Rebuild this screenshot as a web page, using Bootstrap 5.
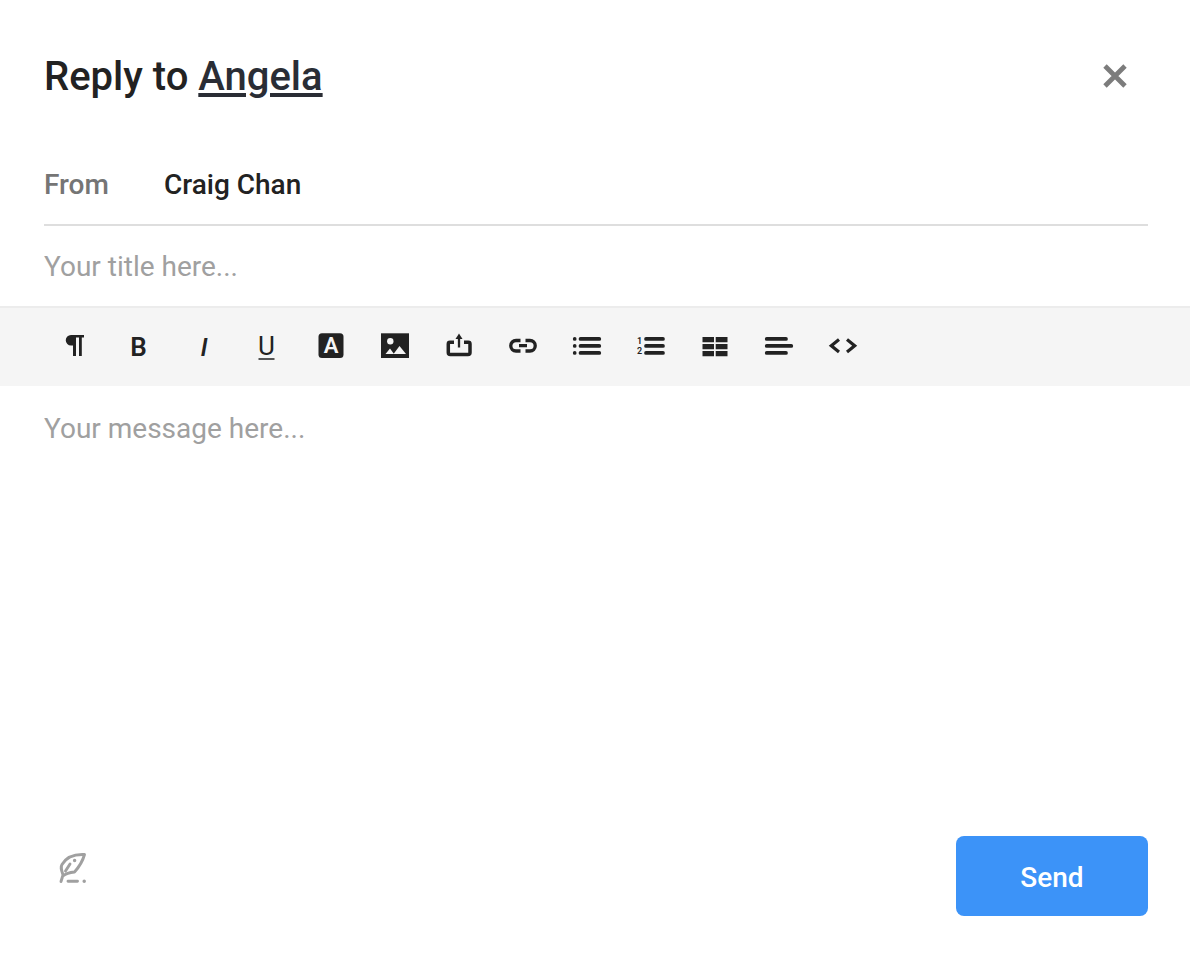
<!DOCTYPE html>
<html lang="en">
<head>
<meta charset="utf-8">
<meta name="viewport" content="width=device-width, initial-scale=1">
<title>Reply to Angela</title>
<link href="https://cdn.jsdelivr.net/npm/bootstrap@5.3.0/dist/css/bootstrap.min.css" rel="stylesheet">
<style>
  body { font-family: Roboto, "Liberation Sans", sans-serif; font-size: 28px; line-height: 32px; color: #222; background: #fff; }
  .gutter { padding-left: 44px; padding-right: 42px; }
  .reply-head { padding-top: 53px; }
  .reply-title { font-size: 40px; line-height: 48px; font-weight: 500; }
  .reply-title a { color: #2a2d35; text-decoration-thickness: 4px; text-underline-offset: 3px; }
  .close-btn { width: 66px; height: 48px; color: #7c7c7c; }
  .from-row { margin-top: 68px; padding-bottom: 23px; border-bottom: 2px solid #dedede; font-weight: 500; }
  .from-label { width: 120px; color: #757575; }
  .field { border: 0; border-radius: 0; padding: 0; color: #222; font-size: 28px; line-height: 32px; background: transparent; box-shadow: none; outline: 0; }
  .field::placeholder { color: #a0a0a0; opacity: 1; }
  .title-field { height: 80px; }
  .tools { padding: 0 43px; min-height: 80px; background: #f5f5f5; box-shadow: inset 0 2px #ececec; color: #222; }
  .tool { width: 64px; height: 80px; color: inherit; }
  .tool svg, .close-btn svg, .sign-btn svg { width: 32px; height: 32px; display: block; }
  .glyph { font-family: Roboto, sans-serif; font-size: 26px; }
  .glyph-a { font-size: 22px; }
  .glyph-digit { font-size: 9px; }
  .message-field { padding-top: 27px; resize: none; }
  .reply-foot { padding-bottom: 46px; }
  .sign-btn { width: 58px; height: 64px; color: #a0a0a0; }
  .send-btn { width: 192px; height: 80px; border-radius: 8px; background: #3c93f8; color: #fff; font-size: 28px; line-height: 32px; font-weight: 500; }
</style>
</head>
<body>
<form class="d-flex flex-column min-vh-100">
  <header class="reply-head gutter d-flex justify-content-between align-items-center">
    <h1 class="reply-title m-0">Reply to <a href="#">Angela</a></h1>
    <button type="button" class="close-btn btn border-0 p-0 d-flex align-items-center justify-content-center" aria-label="Close">
      <svg viewBox="0 0 32 32" fill="none" stroke="currentColor" stroke-width="4.800"><path d="M6 5 26 25M26 5 6 25"/></svg>
    </button>
  </header>

  <div class="gutter">
    <div class="from-row d-flex">
      <span class="from-label">From</span>
      <span>Craig Chan</span>
    </div>
    <input type="text" class="field title-field form-control" placeholder="Your title here..." aria-label="Title">
  </div>

  <div class="tools d-flex flex-wrap" role="toolbar" aria-label="Formatting">
    <button type="button" class="tool btn border-0 p-0 d-flex align-items-center justify-content-center" aria-label="Paragraph">
      <svg viewBox="0 0 32 32" fill="currentColor"><path d="M12 5H25V7.500H22.800V26H20V7.500H17V26H14V15.500H12A5.200 5.200 0 0 1 12 5Z"/></svg>
    </button>
    <button type="button" class="tool btn border-0 p-0 d-flex align-items-center justify-content-center" aria-label="Bold">
      <svg viewBox="0 0 32 32" fill="currentColor"><text class="glyph" x="15.500" y="26" text-anchor="middle" font-weight="600">B</text></svg>
    </button>
    <button type="button" class="tool btn border-0 p-0 d-flex align-items-center justify-content-center" aria-label="Italic">
      <svg viewBox="0 0 32 32" fill="currentColor"><text class="glyph" x="17" y="26" text-anchor="middle" font-style="italic" font-weight="500">I</text></svg>
    </button>
    <button type="button" class="tool btn border-0 p-0 d-flex align-items-center justify-content-center" aria-label="Underline">
      <svg viewBox="0 0 32 32" fill="currentColor"><text class="glyph" x="15.500" y="25" text-anchor="middle">U</text><path fill="#555" d="M7.500 28H23.500V30H7.500Z"/></svg>
    </button>
    <button type="button" class="tool btn border-0 p-0 d-flex align-items-center justify-content-center" aria-label="Text colour">
      <svg viewBox="0 0 32 32" fill="currentColor"><rect x="3.500" y="3.300" width="25" height="24.700" rx="3.500"/><text class="glyph glyph-a" x="16" y="23" text-anchor="middle" font-weight="600" fill="#f5f5f5">A</text></svg>
    </button>
    <button type="button" class="tool btn border-0 p-0 d-flex align-items-center justify-content-center" aria-label="Insert image">
      <svg viewBox="0 0 32 32" fill="currentColor"><path d="M2 3.300H30V28H2Z"/><g fill="#f5f5f5"><circle cx="11.300" cy="11.300" r="3.200"/><path d="M6.500 24 11 18.500 15 24ZM14.500 24 20.500 16 27 24Z"/></g></svg>
    </button>
    <button type="button" class="tool btn border-0 p-0 d-flex align-items-center justify-content-center" aria-label="Upload">
      <svg viewBox="0 0 32 32" fill="none" stroke="currentColor" stroke-width="3.500"><path d="M11 12.300H7Q5.300 12.300 5.300 14V22.500Q5.300 24.500 7.300 24.500H25Q27 24.500 27 22.500V14Q27 12.300 25.300 12.300H21"/><path stroke-width="2.300" d="M16 7V17.500"/><path fill="currentColor" stroke="none" d="M16 3.500 19.500 9H12.500Z"/></svg>
    </button>
    <button type="button" class="tool btn border-0 p-0 d-flex align-items-center justify-content-center" aria-label="Insert link">
      <svg viewBox="0 0 32 32" fill="none" stroke="currentColor" stroke-width="3.300"><path d="M13.500 10.500H9A5.200 5.200 0 0 0 9 21H13.500M18.500 10.500H23A5.200 5.200 0 0 1 23 21H18.500M12 15.700H20"/></svg>
    </button>
    <button type="button" class="tool btn border-0 p-0 d-flex align-items-center justify-content-center" aria-label="Bulleted list">
      <svg viewBox="0 0 32 32" fill="none" stroke="currentColor" stroke-width="3.700" stroke-linecap="round"><path d="M3.700 8.900H3.710M3.700 15.900H3.710M3.700 22.900H3.710M9.500 8.900H28.300M9.500 15.900H28.300M9.500 22.900H28.300"/></svg>
    </button>
    <button type="button" class="tool btn border-0 p-0 d-flex align-items-center justify-content-center" aria-label="Numbered list">
      <svg viewBox="0 0 32 32" fill="none" stroke="currentColor" stroke-width="3.700" stroke-linecap="round"><path d="M11 8.900H28M11 15.900H28M11 22.900H28"/><g class="glyph glyph-digit" font-weight="600" fill="currentColor" stroke="none"><text x="2" y="14">1</text><text x="2" y="24">2</text></g></svg>
    </button>
    <button type="button" class="tool btn border-0 p-0 d-flex align-items-center justify-content-center" aria-label="Insert table">
      <svg viewBox="0 0 32 32" fill="currentColor"><path d="M3.500 7H15V12.200H3.500ZM16.700 7H28.500V12.200H16.700ZM3.500 14H15V19.200H3.500ZM16.700 14H28.500V19.200H16.700ZM3.500 21H15V26.200H3.500ZM16.700 21H28.500V26.200H16.700Z"/></svg>
    </button>
    <button type="button" class="tool btn border-0 p-0 d-flex align-items-center justify-content-center" aria-label="Align">
      <svg viewBox="0 0 32 32" fill="none" stroke="currentColor" stroke-width="3.700" stroke-linecap="round"><path d="M3.700 8.900H23M3.700 15.900H28.300M3.700 22.900H23"/></svg>
    </button>
    <button type="button" class="tool btn border-0 p-0 d-flex align-items-center justify-content-center" aria-label="Code">
      <svg viewBox="0 0 32 32" fill="none" stroke="currentColor" stroke-width="3.200"><path d="M12 9.500 4.300 15.700 12 22M20 9.500 27.700 15.700 20 22"/></svg>
    </button>
  </div>

  <div class="gutter flex-grow-1 d-flex">
    <textarea class="field message-field form-control flex-grow-1" placeholder="Your message here..." aria-label="Message"></textarea>
  </div>

  <footer class="reply-foot gutter d-flex justify-content-between align-items-start">
    <button type="button" class="sign-btn btn border-0 p-0 d-flex align-items-center justify-content-center" aria-label="Add signature">
      <svg viewBox="0 0 32 32" fill="none" stroke="currentColor" stroke-width="2.900" stroke-linecap="round" stroke-linejoin="round"><path d="M4 29.500 6 23M8.500 19 13 12M6 23C4 17 3.500 15 5 12.500C9 5.500 17 2 27.500 2.500C26 8 22 15 17.500 20C13 20.500 9 21.500 6 24M11 29.200H20.500"/><path stroke-width="3.500" d="M17.600 8.500H17.610M27.200 29.200H27.210"/></svg>
    </button>
    <button type="submit" class="send-btn btn border-0 px-0 pt-1 pb-0">Send</button>
  </footer>
</form>
<script src="https://cdn.jsdelivr.net/npm/bootstrap@5.3.0/dist/js/bootstrap.bundle.min.js"></script>
</body>
</html>
